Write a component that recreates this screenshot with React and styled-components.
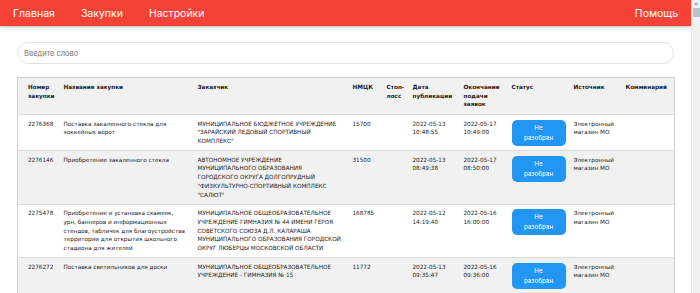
import React from "react";
import styled, { createGlobalStyle } from "styled-components";

const Global = createGlobalStyle`
  html, body { margin: 0; padding: 0; background: #fff; }
  body {
    font-family: "DejaVu Sans", Verdana, sans-serif;
    padding-right: 9px;
    overflow: hidden;
  }
  * { box-sizing: border-box; }
`;

const Scrollbar = styled.div`
  position: fixed;
  top: 0;
  right: 0;
  width: 9px;
  height: 100vh;
  background: #f1f1f1;
  border-left: 1px solid #e8e8e8;
`;

const ScrollArrow = styled.div`
  position: absolute;
  top: 2px;
  left: 2px;
  width: 0;
  height: 0;
  border-left: 2.5px solid transparent;
  border-right: 2.5px solid transparent;
  border-bottom: 3px solid #a3a3a3;
`;

const ScrollThumb = styled.div`
  position: absolute;
  top: 8px;
  left: 1px;
  width: 7px;
  height: 9px;
  background: #c1c1c1;
`;

const Nav = styled.nav`
  height: 26px;
  background: #f44336;
  display: flex;
  align-items: center;
  box-shadow: 0 1px 3px rgba(0, 0, 0, 0.25);
  font-family: Inter, "Noto Sans", sans-serif;
`;

const NavItem = styled.a`
  color: #fff;
  font-size: 10.5px;
  padding: 0 13px;
  text-decoration: none;
  margin-left: ${(p) => (p.$right ? "auto" : "0")};
`;

const Main = styled.main`
  padding: 16px 17px 20px 17px;
  display: flex;
  flex-direction: column;
  gap: 13px;
`;

const Search = styled.input`
  height: 22px;
  border: 1px solid #e2e2e2;
  border-radius: 11px;
  padding: 0 6px;
  font-family: Inter, "Noto Sans", sans-serif;
  font-size: 7.5px;
  outline: none;
  &::placeholder { color: #777; }
`;

const Table = styled.table`
  width: 100%;
  border-collapse: collapse;
  table-layout: fixed;
  border: 1px solid #cfcfcf;
  font-size: 5.7px;
  line-height: 8.7px;
  color: #1a1a1a;
`;

const Row = styled.tr`
  background: ${(p) => (p.$gray ? "#f1f1f1" : "#fff")};
  border-bottom: 1px solid #dcdcdc;
`;

const Th = styled.th`
  text-align: left;
  vertical-align: top;
  font-weight: bold;
  padding: 5px 5px;
  white-space: nowrap;
  &:first-child { padding-left: 10px; }
`;

const Td = styled.td`
  vertical-align: top;
  padding: 4.5px 5px;
  white-space: nowrap;
  &:first-child { padding-left: 10px; }
`;

const StatusButton = styled.button`
  width: 54px;
  height: 26px;
  border: none;
  border-radius: 5px;
  background: #2196f3;
  color: #fff;
  font-family: Inter, "Noto Sans", sans-serif;
  font-size: 6.3px;
  line-height: 10px;
  padding: 0;
  display: flex;
  flex-direction: column;
  align-items: center;
  justify-content: center;
`;

const cols = [41, 134, 155, 34, 26, 51, 48, 62, 52, 54];

const headers = [
  ["Номер", "закупки"],
  ["Название закупки"],
  ["Заказчик"],
  ["НМЦК"],
  ["Стоп-", "лосс"],
  ["Дата", "публикации"],
  ["Окончание", "подачи", "заявок"],
  ["Статус"],
  ["Источник"],
  ["Комменарий"],
];

const rows = [
  {
    id: "2276368",
    name: ["Поставка закаленного стекла для", "хоккейных ворот"],
    customer: [
      "МУНИЦИПАЛЬНОЕ БЮДЖЕТНОЕ УЧРЕЖДЕНИЕ",
      "\"ЗАРАЙСКИЙ ЛЕДОВЫЙ СПОРТИВНЫЙ",
      "КОМПЛЕКС\"",
    ],
    price: "15700",
    pub: ["2022-05-13", "10:48:55"],
    end: ["2022-05-17", "10:49:00"],
  },
  {
    id: "2276146",
    name: ["Приобретение закаленного стекла"],
    customer: [
      "АВТОНОМНОЕ УЧРЕЖДЕНИЕ",
      "МУНИЦИПАЛЬНОГО ОБРАЗОВАНИЯ",
      "ГОРОДСКОГО ОКРУГА ДОЛГОПРУДНЫЙ",
      "\"ФИЗКУЛЬТУРНО-СПОРТИВНЫЙ КОМПЛЕКС",
      "\"САЛЮТ\"",
    ],
    price: "31500",
    pub: ["2022-05-13", "08:49:38"],
    end: ["2022-05-17", "08:50:00"],
  },
  {
    id: "2275478",
    name: [
      "Приобретение и установка скамеек,",
      "урн, баннеров и информационных",
      "стендов, табличек для благоустройства",
      "территории для открытия школьного",
      "стадиона для жителей",
    ],
    customer: [
      "МУНИЦИПАЛЬНОЕ ОБЩЕОБРАЗОВАТЕЛЬНОЕ",
      "УЧРЕЖДЕНИЕ ГИМНАЗИЯ № 44 ИМЕНИ ГЕРОЯ",
      "СОВЕТСКОГО СОЮЗА Д.Л. КАЛАРАША",
      "МУНИЦИПАЛЬНОГО ОБРАЗОВАНИЯ ГОРОДСКОЙ",
      "ОКРУГ ЛЮБЕРЦЫ МОСКОВСКОЙ ОБЛАСТИ",
    ],
    price: "168785",
    pub: ["2022-05-12", "14:19:40"],
    end: ["2022-05-16", "16:00:00"],
  },
  {
    id: "2276272",
    name: ["Поставка светильников для доски"],
    customer: [
      "МУНИЦИПАЛЬНОЕ ОБЩЕОБРАЗОВАТЕЛЬНОЕ",
      "УЧРЕЖДЕНИЕ - ГИМНАЗИЯ № 15",
    ],
    price: "11772",
    pub: ["2022-05-13", "09:35:47"],
    end: ["2022-05-16", "09:36:00"],
  },
];

const Lines = ({ lines }) =>
  lines.map((l, i) => (
    <React.Fragment key={i}>
      {i > 0 && <br />}
      {l}
    </React.Fragment>
  ));

export default function App() {
  return (
    <>
      <Global />
      <Nav>
        <NavItem href="#">Главная</NavItem>
        <NavItem href="#">Закупки</NavItem>
        <NavItem href="#">Настройки</NavItem>
        <NavItem href="#" $right>
          Помощь
        </NavItem>
      </Nav>
      <Main>
        <Search placeholder="Введите слово" />
        <Table>
          <colgroup>
            {cols.map((w, i) => (
              <col key={i} style={{ width: w }} />
            ))}
          </colgroup>
          <thead>
            <Row $gray>
              {headers.map((h, i) => (
                <Th key={i}>
                  <Lines lines={h} />
                </Th>
              ))}
            </Row>
          </thead>
          <tbody>
            {rows.map((r, i) => (
              <Row key={r.id} $gray={i % 2 === 1}>
                <Td>{r.id}</Td>
                <Td>
                  <Lines lines={r.name} />
                </Td>
                <Td>
                  <Lines lines={r.customer} />
                </Td>
                <Td>{r.price}</Td>
                <Td></Td>
                <Td>
                  <Lines lines={r.pub} />
                </Td>
                <Td>
                  <Lines lines={r.end} />
                </Td>
                <Td>
                  <StatusButton>
                    <span>Не</span>
                    <span>разобран</span>
                  </StatusButton>
                </Td>
                <Td>
                  <Lines lines={["Электронный", "магазин МО"]} />
                </Td>
                <Td></Td>
              </Row>
            ))}
          </tbody>
        </Table>
      </Main>
      <Scrollbar>
        <ScrollArrow />
        <ScrollThumb />
      </Scrollbar>
    </>
  );
}
